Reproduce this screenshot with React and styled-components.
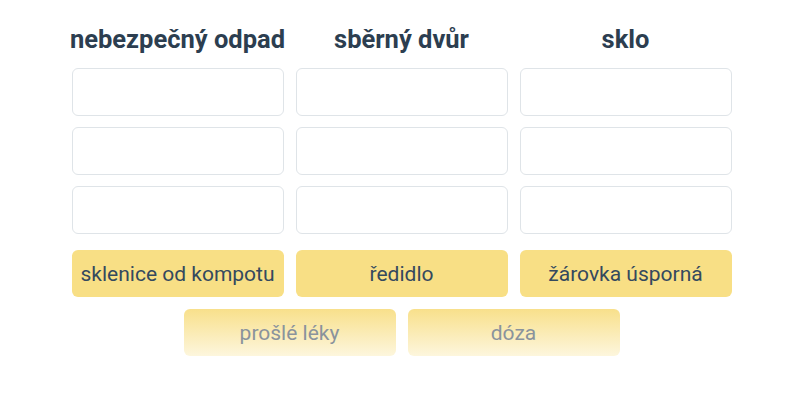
import React from "react";
import styled, { createGlobalStyle } from "styled-components";

const columns = ["nebezpečný odpad", "sběrný dvůr", "sklo"];
const placed = ["sklenice od kompotu", "ředidlo", "žárovka úsporná"];
const waiting = ["prošlé léky", "dóza"];

const App = () => {
  return (
    <>
      <GlobalStyle />
      <Page>
        <Board>
          {columns.map((title) => (
            <Column key={title}>
              <Heading>{title}</Heading>
              <Slot />
              <Slot />
              <Slot />
            </Column>
          ))}
        </Board>
        <CardRow>
          {placed.map((label) => (
            <Card key={label}>{label}</Card>
          ))}
        </CardRow>
        <Pool>
          {waiting.map((label) => (
            <Card key={label} faded>
              {label}
            </Card>
          ))}
        </Pool>
      </Page>
    </>
  );
};

export default App;

const GlobalStyle = createGlobalStyle`
  body {
    margin: 0;
    background: #fff;
    font-family: Roboto, "Liberation Sans", sans-serif;
  }
`;

const Page = styled.div`
  width: 660px;
  margin: 0 auto;
  padding: 24px 0 0 3px;
  display: flex;
  flex-direction: column;
  gap: 12px;
`;

const Board = styled.div`
  display: grid;
  grid-template-columns: repeat(3, minmax(0, 1fr));
  column-gap: 12px;
`;

const Column = styled.div`
  display: flex;
  flex-direction: column;
  gap: 11px;
`;

const Heading = styled.h2`
  margin: 0 -10px 3px;
  height: 30px;
  line-height: 30px;
  white-space: nowrap;
  text-align: center;
  font-size: 25.5px;
  font-weight: 700;
  color: #2c3e50;
`;

const Slot = styled.div`
  height: 48px;
  box-sizing: border-box;
  border: 1px solid #dfe4e8;
  border-radius: 6px;
  background: #fff;
`;

const CardRow = styled.div`
  display: grid;
  grid-template-columns: repeat(3, minmax(0, 1fr));
  column-gap: 12px;
  margin-top: 4px;
`;

const Pool = styled.div`
  display: flex;
  justify-content: center;
  gap: 12px;
`;

const Card = styled.div`
  width: ${(p) => (p.faded ? "212px" : "auto")};
  height: 47px;
  display: flex;
  align-items: center;
  justify-content: center;
  border-radius: 6px;
  font-size: 21px;
  white-space: nowrap;
  color: ${(p) => (p.faded ? "#8a939c" : "#34495e")};
  background: ${(p) =>
    p.faded
      ? "linear-gradient(180deg, #f8e08b 0%, #fdf6dd 100%)"
      : "#f8df85"};
`;
